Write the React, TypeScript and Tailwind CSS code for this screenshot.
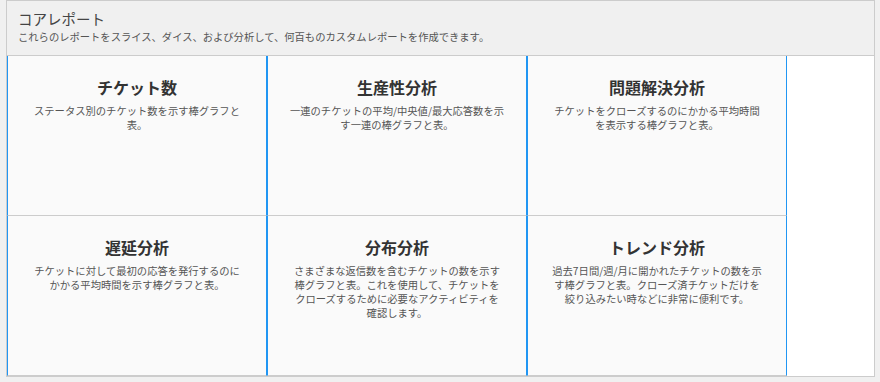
import React from "react";

const cards: { title: string; lines: string[] }[] = [
  { title: "チケット数", lines: ["ステータス別のチケット数を示す棒グラフと", "表。"] },
  { title: "生産性分析", lines: ["一連のチケットの平均/中央値/最大応答数を示", "す一連の棒グラフと表。"] },
  { title: "問題解決分析", lines: ["チケットをクローズするのにかかる平均時間", "を表示する棒グラフと表。"] },
  { title: "遅延分析", lines: ["チケットに対して最初の応答を発行するのに", "かかる平均時間を示す棒グラフと表。"] },
  {
    title: "分布分析",
    lines: [
      "さまざまな返信数を含むチケットの数を示す",
      "棒グラフと表。これを使用して、チケットを",
      "クローズするために必要なアクティビティを",
      "確認します。",
    ],
  },
  {
    title: "トレンド分析",
    lines: [
      "過去7日間/週/月に開かれたチケットの数を示",
      "す棒グラフと表。クローズ済チケットだけを",
      "絞り込みたい時などに非常に便利です。",
    ],
  },
];

export default function App() {
  return (
    <div
      className="min-h-screen bg-[#f0f0f0]"
      style={{ fontFamily: '"Noto Sans CJK JP", "Noto Sans", sans-serif' }}
    >
      <div className="ml-[6px] w-[869px] border border-[#cccccc] bg-white">
        <div className="h-[55px] border-b border-[#cccccc] bg-[#f0f0f0] pl-[11px] pt-[9px]">
          <div className="text-[14.5px] leading-[18px] text-[#444444]">コアレポート</div>
          <div className="mt-[2px] text-[10.3px] leading-[14px] text-[#555555]">
            これらのレポートをスライス、ダイス、および分析して、何百ものカスタムレポートを作成できます。
          </div>
        </div>
        <div className="grid grid-cols-[260px_260px_260px]">
          {cards.map((c) => (
            <div
              key={c.title}
              className="flex h-[160px] flex-col items-center border-x border-b border-x-[#2196f3] border-b-[#cccccc] bg-[#fafafa] pt-[21px]"
            >
              <div className="text-[16px] font-bold leading-[20px] text-[#333333]">{c.title}</div>
              <div className="mt-[7px] text-center text-[10.3px] leading-[14px] text-[#555555]">
                {c.lines.map((l, i) => (
                  <div key={i} className="whitespace-nowrap">
                    {l}
                  </div>
                ))}
              </div>
            </div>
          ))}
        </div>
      </div>
    </div>
  );
}
